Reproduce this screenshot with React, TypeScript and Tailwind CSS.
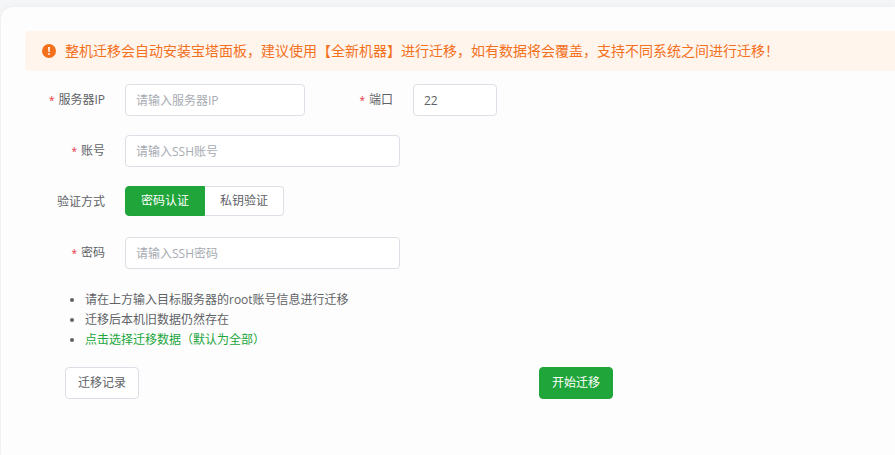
import React, { useState } from 'react'
import clsx from 'clsx'

const authTypes = [
  { value: 'password', name: '密码认证' },
  { value: 'key', name: '私钥验证' },
]

const inputClass =
  'h-8 rounded-sm border border-[#dcdfe6] bg-white px-2.5 text-[#606266] outline-none placeholder:text-[#a8abb2] focus:border-[#20a53a]'

interface FormLabelProps {
  htmlFor?: string
  id?: string
  required?: boolean
  className?: string
  children: React.ReactNode
}

function FormLabel({ htmlFor, id, required, className, children }: FormLabelProps) {
  return (
    <label htmlFor={htmlFor} id={id} className={clsx('flex h-8 shrink-0 justify-end gap-1 pr-5 leading-8', className)}>
      {required && <span className="text-[10px] leading-8 text-[#e8323c]">*</span>}
      {children}
    </label>
  )
}

function App() {
  const [host, setHost] = useState('')
  const [port, setPort] = useState('22')
  const [user, setUser] = useState('')
  const [password, setPassword] = useState('')
  const [authType, setAuthType] = useState('password')

  return (
    <div className="flex min-h-screen flex-col bg-[#f5f6f7] pt-[7px] pl-px font-['Open_Sans','Noto_Sans_CJK_SC',sans-serif] text-xs text-[#606266]">
      <main className="grow rounded-tl-xl bg-[#fdfdfd] pt-6 pl-6 shadow-[0_0_8px_rgba(0,0,0,0.05)]">
        {/* Warning banner */}
        <div role="alert" className="flex min-h-10 items-center gap-2 rounded-l-sm bg-[#fff5ec] px-4 text-sm text-[#f3701d]">
          <svg className="size-4 shrink-0" viewBox="0 0 16 16" aria-hidden="true">
            <circle cx="8" cy="8" r="7" fill="#f3701d" />
            <path d="M7 4h2l-.3 5H7.3z" fill="#fff5ec" />
            <circle cx="8" cy="11" r="1" fill="#fff5ec" />
          </svg>
          <span>整机迁移会自动安装宝塔面板，建议使用【全新机器】进行迁移，如有数据将会覆盖，支持不同系统之间进行迁移！</span>
        </div>

        <form className="mt-[13px]" onSubmit={(e) => e.preventDefault()}>
          <div className="flex flex-col gap-[19px]">
            <div className="flex">
              <FormLabel htmlFor="host" required className="w-[100px]">服务器IP</FormLabel>
              <input id="host" className={clsx(inputClass, 'w-[180px]')} placeholder="请输入服务器IP" value={host} onChange={(e) => setHost(e.target.value)} />
              <FormLabel htmlFor="port" required className="w-[108px]">端口</FormLabel>
              <input id="port" className={clsx(inputClass, 'w-[84px]')} value={port} onChange={(e) => setPort(e.target.value)} />
            </div>

            <div className="flex">
              <FormLabel htmlFor="user" required className="w-[100px]">账号</FormLabel>
              <input id="user" className={clsx(inputClass, 'w-[275px]')} placeholder="请输入SSH账号" value={user} onChange={(e) => setUser(e.target.value)} />
            </div>

            {/* Auth type switch */}
            <div className="flex">
              <FormLabel id="auth-label" className="w-[100px]">验证方式</FormLabel>
              <div role="radiogroup" aria-labelledby="auth-label" className="flex h-[30px]">
                {authTypes.map((item) => (
                  <label
                    key={item.value}
                    className="relative flex cursor-pointer items-center border border-[#dcdfe6] bg-white px-[15px] first:rounded-l-sm last:rounded-r-sm last:border-l-0 has-checked:border-[#20a53a] has-checked:bg-[#20a53a] has-checked:text-white"
                  >
                    <input
                      type="radio"
                      name="authType"
                      className="sr-only"
                      value={item.value}
                      checked={authType === item.value}
                      onChange={() => setAuthType(item.value)}
                    />
                    {item.name}
                  </label>
                ))}
              </div>
            </div>

            <div className="flex">
              <FormLabel htmlFor="password" required className="w-[100px]">密码</FormLabel>
              <input id="password" type="password" className={clsx(inputClass, 'w-[275px]')} placeholder="请输入SSH密码" value={password} onChange={(e) => setPassword(e.target.value)} />
            </div>
          </div>

          {/* Tips */}
          <ul className="mt-[21px] ml-[60px] list-disc leading-5">
            <li>请在上方输入目标服务器的root账号信息进行迁移</li>
            <li>迁移后本机旧数据仍然存在</li>
            <li>
              <a href="#" className="text-[#20a53a]">点击选择迁移数据（默认为全部）</a>
            </li>
          </ul>

          <div className="mt-[17px] ml-10 flex max-w-[548px] justify-between">
            <button type="button" className="h-8 cursor-pointer rounded-sm border border-[#dcdfe6] bg-white px-3">
              迁移记录
            </button>
            <button type="submit" className="h-8 cursor-pointer rounded-sm border border-[#20a53a] bg-[#20a53a] px-3 text-white">
              开始迁移
            </button>
          </div>
        </form>
      </main>
    </div>
  )
}

export default App
